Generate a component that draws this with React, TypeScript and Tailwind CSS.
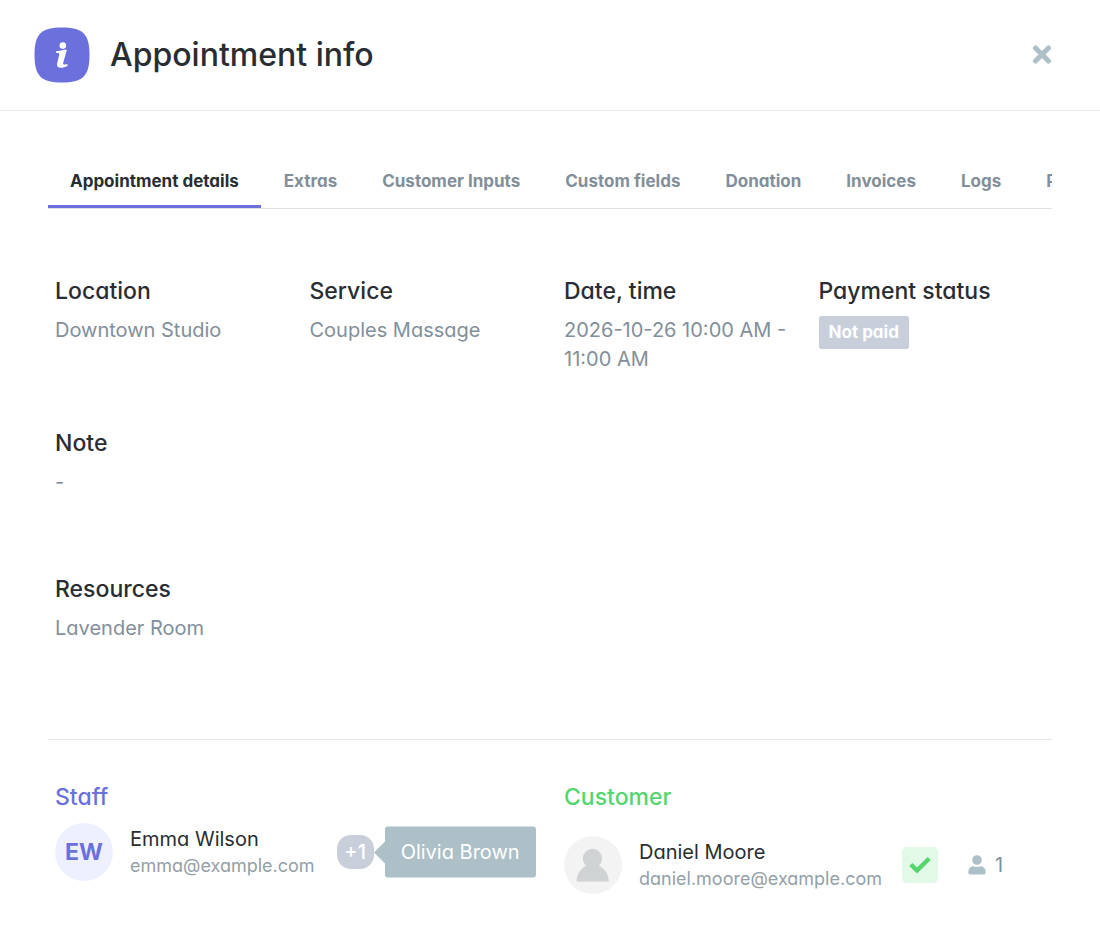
import { useState } from 'react'
import type { ReactNode } from 'react'

const TABS = [
  'Appointment details',
  'Extras',
  'Customer Inputs',
  'Custom fields',
  'Donation',
  'Invoices',
  'Logs',
  'Payments',
]

interface FieldProps {
  label: string
  children: ReactNode
}

function Field({ label, children }: FieldProps) {
  return (
    <div className="px-[14px]">
      <h3 className="mb-2 text-[23px] leading-[33px] font-medium text-[#292d32]">{label}</h3>
      <div className="text-[20px] leading-[29px] text-[#828f9a]">{children}</div>
    </div>
  )
}

interface PersonProps {
  name: string
  email: string
  avatar: ReactNode
}

function Person({ name, email, avatar }: PersonProps) {
  return (
    <>
      {avatar}
      <div className="ml-[17px] whitespace-nowrap">
        <p className="text-[20px] leading-[28px] text-[#292d32]">{name}</p>
        <p className="text-[18px] leading-[26px] text-[#949fa7]">{email}</p>
      </div>
    </>
  )
}

function InfoIcon() {
  return (
    <svg viewBox="0 0 56 56" className="size-14 shrink-0" aria-hidden="true">
      <path
        d="M28 .5C48 .5 55.5 6 55.5 28S48 55.5 28 55.5.5 50 .5 28 8 .5 28 .5Z"
        fill="#6c70dc"
      />
      <circle cx="28.8" cy="18.6" r="3.3" fill="#fff" />
      <path
        d="M22 24.2c3.500-.2 6.600-.8 10-1.600l.8.500-3.500 12.500c-.3 1.500 0 2 .8 2 .9 0 1.700-.5 3-.4.9.1.9 1.300.1 1.800-2 1.200-4.200 1.800-6.200 1.800-3 0-4.500-1.400-3.900-4.200l2.200-9c.2-1-.2-1.400-1.300-1.500l-2-.3Z"
        fill="#fff"
      />
    </svg>
  )
}

function CloseIcon() {
  return (
    <svg viewBox="0 0 20 20" className="size-5" aria-hidden="true">
      <path d="M3.500 3 16.500 16M16.500 3 3.500 16" stroke="#adbfc7" strokeWidth="5" strokeLinecap="round" />
    </svg>
  )
}

function BlankAvatar() {
  return (
    <svg viewBox="0 0 58 58" className="size-[58px] shrink-0" aria-hidden="true">
      <circle cx="29" cy="29" r="29" fill="#f3f3f3" />
      <circle cx="28.5" cy="22.5" r="9.7" fill="#d0d3d4" />
      <path d="M12.500 45.500c.3-8.500 5-13 9-15.500h14c4.500 2.500 9 7 9.200 15.500Z" fill="#d0d3d4" />
    </svg>
  )
}

function UserIcon() {
  return (
    <svg viewBox="0 0 18 20" className="h-5 w-[18px]" fill="#adbfc7" aria-hidden="true">
      <circle cx="9" cy="5" r="4.8" />
      <path d="M.3 16.500C.8 12.900 3 11.300 5.500 11.300c1.200.8 5.800.8 7 0 2.500 0 4.700 1.600 5.200 5.200.2 2-.5 2.900-2.200 2.900h-13c-1.700 0-2.400-.9-2.200-2.900Z" />
    </svg>
  )
}

export default function App() {
  const [activeTab, setActiveTab] = useState(TABS[0])

  return (
    <div className="bg-white font-['Inter',sans-serif] [font-feature-settings:'cv11']">
      <header className="flex h-[111px] items-center border-b border-[#e3eaf0] pr-12 pl-[34px]">
        <InfoIcon />
        <h1 className="ml-5 text-[32px] leading-[48px] font-medium text-[#292d32]">Appointment info</h1>
        <button type="button" aria-label="Close" className="ml-auto">
          <CloseIcon />
        </button>
      </header>

      <main className="px-12 pt-11">
        <div role="tablist" className="flex gap-px overflow-hidden border-b border-[#e0e2e4]">
          {TABS.map((tab) => (
            <button
              key={tab}
              type="button"
              role="tab"
              aria-selected={activeTab === tab}
              onClick={() => setActiveTab(tab)}
              className={`h-[53px] shrink-0 border-b-3 px-[22px] pt-0.5 text-[17px] leading-[26px] font-bold whitespace-nowrap ${
                activeTab === tab
                  ? 'border-[#6c70dc] text-[#292d32]'
                  : 'border-transparent text-[#828f9a]'
              }`}
            >
              {tab}
            </button>
          ))}
        </div>

        <section className="-mx-[7px] pt-[66px] pb-24">
          <div className="mb-[53px] grid grid-cols-4">
            <Field label="Location">Downtown Studio</Field>
            <Field label="Service">Couples Massage</Field>
            <Field label="Date, time">2026-10-26 10:00 AM - 11:00 AM</Field>
            <Field label="Payment status">
              <span className="inline-block rounded-xs bg-[#c8cfdb] px-[10px] text-[17px] leading-[33px] font-bold text-white">
                Not paid
              </span>
            </Field>
          </div>
          <div className="mb-[76px]">
            <Field label="Note">-</Field>
          </div>
          <Field label="Resources">Lavender Room</Field>
        </section>

        <hr className="border-[#e3e6e9]" />

        <section className="-mx-[7px] grid grid-cols-2 pt-[41px]">
          <div className="px-[14px]">
            <h3 className="text-[23px] leading-[33px] font-medium text-[#6c70dc]">Staff</h3>
            <div className="mt-[9px] flex items-center">
              <Person
                name="Emma Wilson"
                email="emma@example.com"
                avatar={
                  <span className="flex size-[58px] shrink-0 items-center justify-center rounded-full bg-[#eef0ff] text-[23px] font-bold text-[#6c70dc]">
                    EW
                  </span>
                }
              />
              <div className="relative ml-[22px]">
                <button
                  type="button"
                  aria-describedby="more-staff"
                  className="flex h-[34px] w-[37px] items-center justify-center rounded-[14px] bg-[#c8cfdb] text-[20px] font-medium text-white"
                >
                  +1
                </button>
                <div
                  id="more-staff"
                  role="tooltip"
                  className="absolute top-1/2 left-full ml-[11px] -translate-y-1/2 rounded-[3px] bg-[#adbfc7] px-4 py-[11px] text-[20px] leading-[29px] whitespace-nowrap text-white"
                >
                  <svg viewBox="0 0 11 22" className="absolute top-1/2 right-full h-[22px] w-[11px] -translate-y-1/2" aria-hidden="true">
                    <path d="M11 0v22L0 11Z" fill="#adbfc7" />
                  </svg>
                  Olivia Brown
                </div>
              </div>
            </div>
          </div>

          <div className="px-[14px] pb-14">
            <h3 className="text-[23px] leading-[33px] font-medium text-[#55d56e]">Customer</h3>
            <div className="mt-[22px] flex items-center">
              <Person name="Daniel Moore" email="daniel.moore@example.com" avatar={<BlankAvatar />} />
              <span className="ml-5 flex size-9 shrink-0 items-center justify-center rounded-[5px] bg-[#e1f9e6]">
                <svg viewBox="0 0 22 18" className="h-[18px] w-[22px]" fill="none" aria-label="Approved">
                  <path d="m1.800 8.500 6.200 6 12.200-12" stroke="#55d56e" strokeWidth="4.4" />
                </svg>
              </span>
              <span className="ml-[30px] flex items-center gap-[9px] text-[20px] leading-[29px] text-[#828f9a]">
                <UserIcon />1
              </span>
            </div>
          </div>
        </section>
      </main>
    </div>
  )
}
